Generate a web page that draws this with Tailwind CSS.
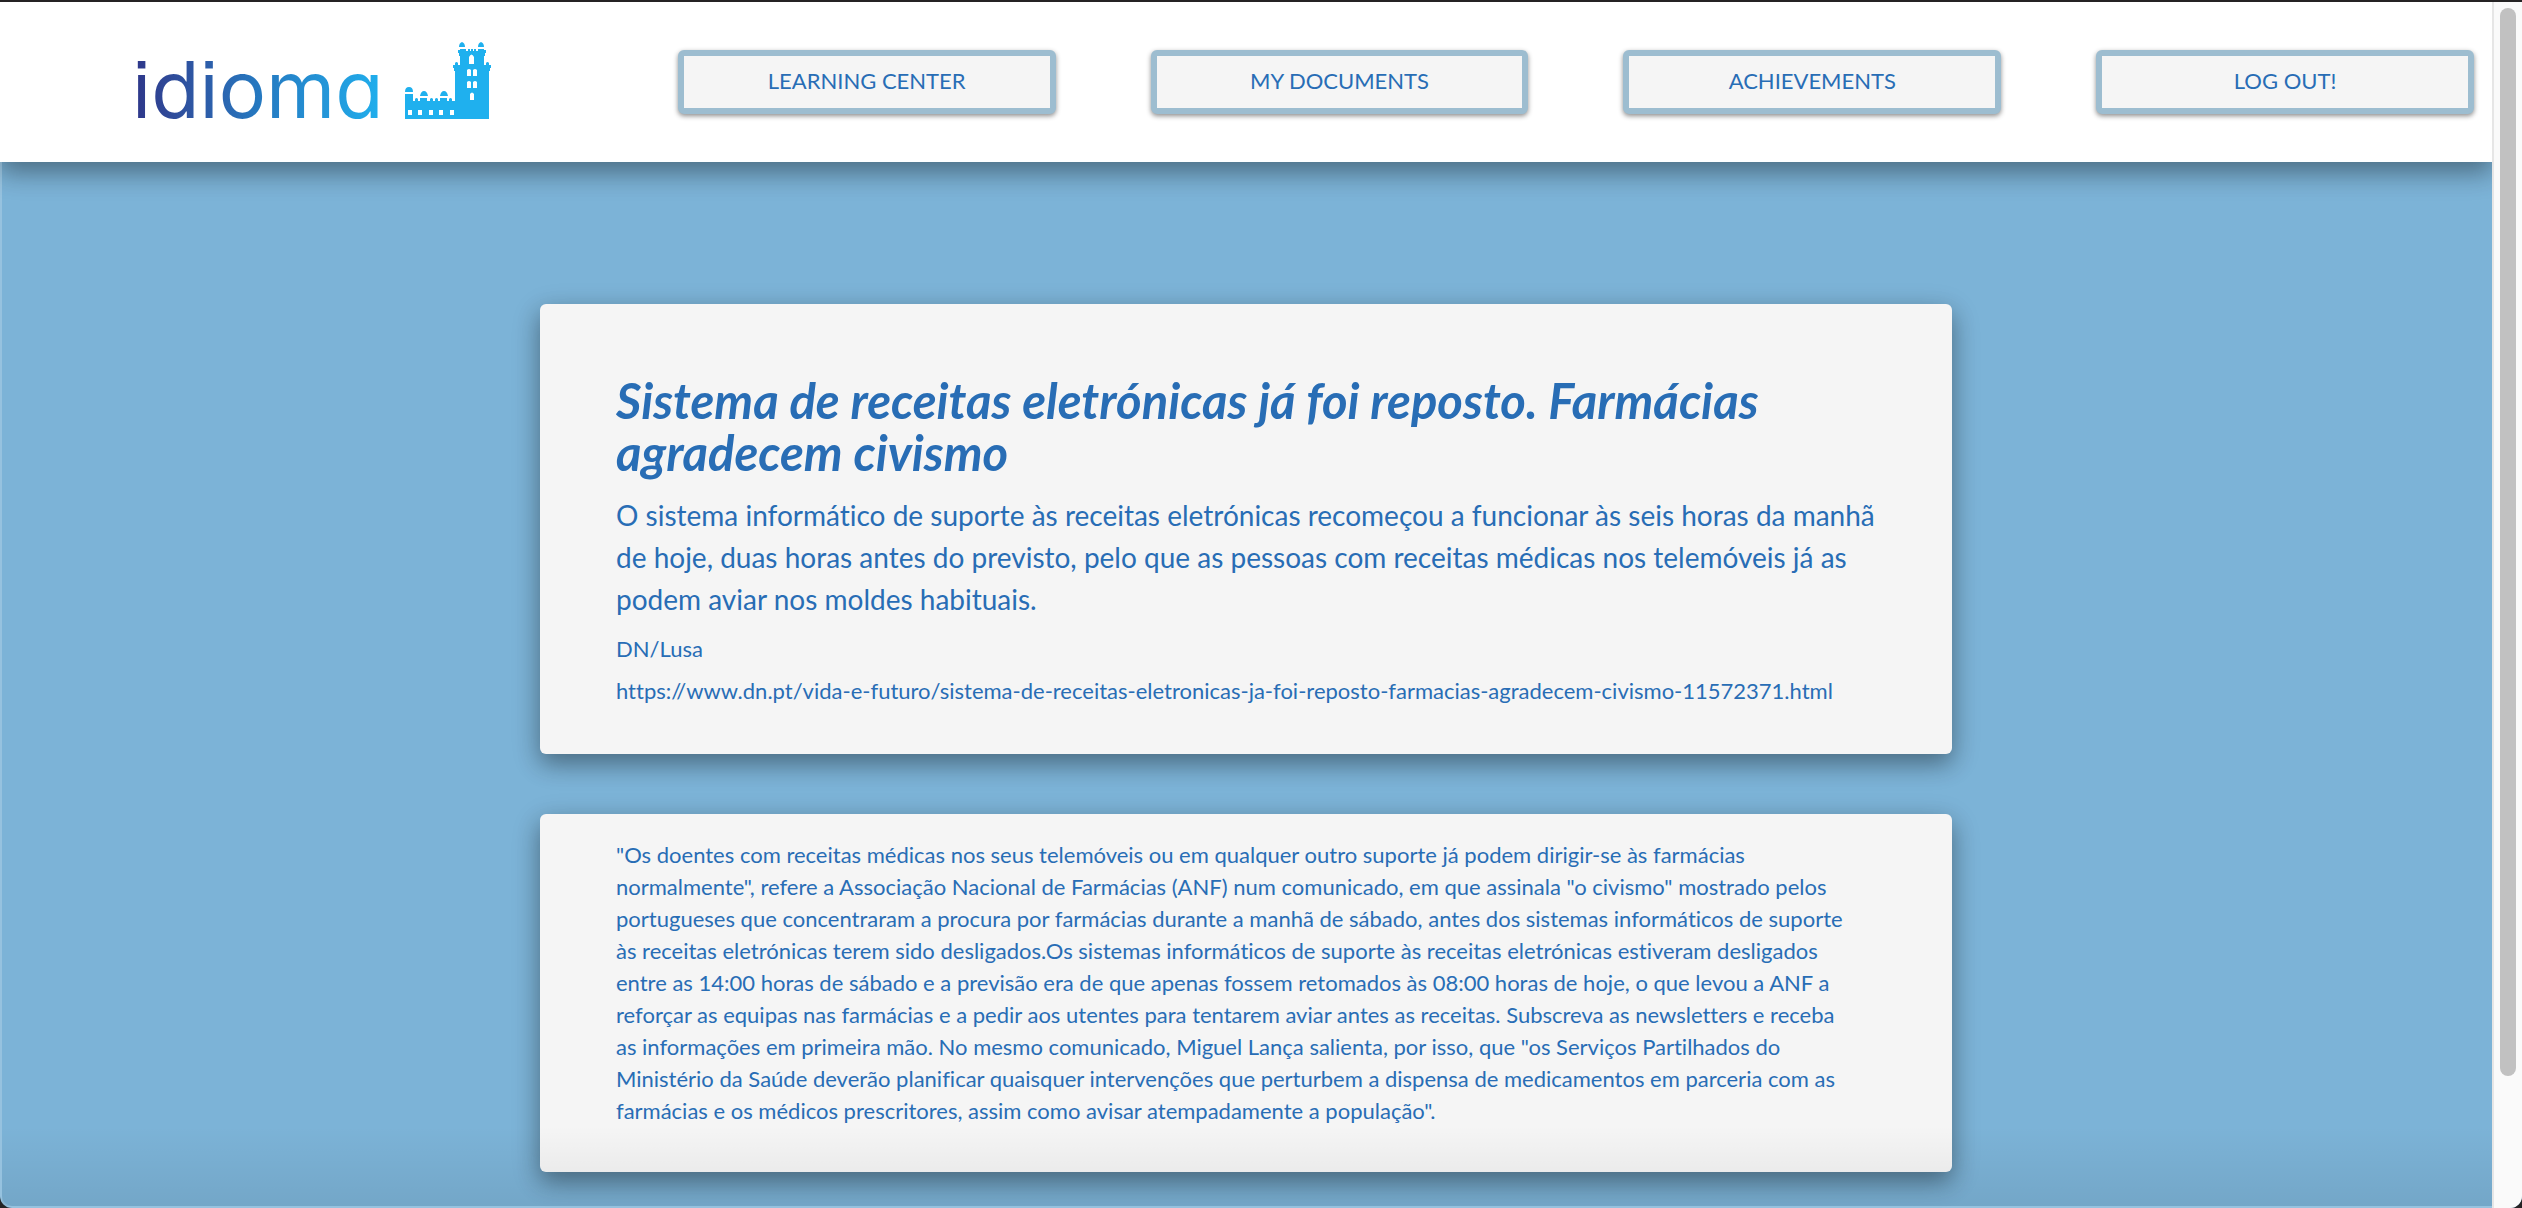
<!DOCTYPE html>
<html lang="pt">
<head>
<meta charset="utf-8">
<title>idioma</title>
<script src="https://cdn.jsdelivr.net/npm/@tailwindcss/browser@4"></script>
</head>
<body class="bg-[#252324] font-['Lato',sans-serif] text-[#286db5] [font-variant-ligatures:none]">
<div class="relative flex h-screen overflow-hidden rounded-b-xl border-t-2 border-[#252324] bg-[#7cb3d7]">
  <div class="flex min-w-0 flex-1 flex-col">
    <header class="relative z-10 flex h-40 shrink-0 items-start justify-between bg-white shadow-[0_10px_22px_rgba(0,0,0,0.25),0_8px_30px_rgba(0,0,0,0.2)]">
      <a href="#" class="flex pl-32 pt-9" aria-label="idioma">
        <span class="bg-linear-to-r from-[#2e3487] via-[#2577bf] to-[#1fb0ee] bg-clip-text pl-1 font-['Inter',sans-serif] text-[79px] leading-[102px] font-normal text-transparent [font-feature-settings:'cv11','ss07']">idioma</span>
        <svg class="mt-1 ml-5 h-[78px] w-[88px]" viewBox="0 0 88 78" fill="#1fb0ee" aria-hidden="true">
          <path fill-rule="evenodd" d="M1 77V57h8v-1 3h2v-2q1.500-2 3 0v2h2v-3h7v3h3v-2q1.500-2 3 0v2h2v-2q1.500-2 3 0v2h2v-3h7v3h2v-2q1.500-2 3 0v2h3V29h-1v-3h-1v-3h2v-2q1.500-2 3 0v2h2V14h-1v-3h-1V8h2V7h6v2h2V7h2v2h1V7h2v2h1V7h2v2h2V7h6v1h2v3h-1v3h-1v9h2v-2q1.500-2 3 0v2h2v3h-1v3h-1v48ZM65 22h5v-7q-2.500-5-5 0ZM63 34h4v-6q-2-2-4 0ZM69 34h4v-6q-2-2-4 0ZM63 46h4v-6q-2-2-4 0ZM69 46h4v-6q-2-2-4 0ZM66 58h4v-6q-2-3-4 0ZM4 73h4v-5h-4ZM14 73h4v-5h-4ZM25 73h4v-5h-4ZM35 73h4v-5h-4ZM46 73h4v-5h-4Z"/>
          <path d="M1 50q0-5 4-5q4 0 4 5ZM1 52h8v5h-8ZM16 54q1-5 4-5q3 0 4 5ZM36 54q1-5 4-5q3 0 4 5ZM55 5q0-4 3-5q3 1 3 5ZM74 5q0-4 3-5q3 1 3 5Z"/>
        </svg>
      </a>
      <nav class="mt-12 grid w-[calc(72%+20px)] shrink-0 grid-cols-4 gap-x-[95px] pr-[18px] text-[22px] leading-7">
        <button class="h-16 rounded-md border-[6px] border-[#9dbdd0] bg-[#f5f5f5] pb-0.5 shadow-[0_2px_5px_rgba(0,0,0,0.45)]">LEARNING CENTER</button>
        <button class="h-16 rounded-md border-[6px] border-[#9dbdd0] bg-[#f5f5f5] pb-0.5 shadow-[0_2px_5px_rgba(0,0,0,0.45)]">MY DOCUMENTS</button>
        <button class="h-16 rounded-md border-[6px] border-[#9dbdd0] bg-[#f5f5f5] pb-0.5 shadow-[0_2px_5px_rgba(0,0,0,0.45)]">ACHIEVEMENTS</button>
        <button class="h-16 rounded-md border-[6px] border-[#9dbdd0] bg-[#f5f5f5] pb-0.5 shadow-[0_2px_5px_rgba(0,0,0,0.45)]">LOG OUT!</button>
      </nav>
    </header>
    <main class="mx-auto flex w-full max-w-[1412px] flex-col gap-[60px] pt-[142px] whitespace-nowrap">
      <article class="rounded-md bg-[#f5f5f5] px-[76px] pt-[70px] pb-[42px] shadow-[0_10px_22px_rgba(0,0,0,0.25),0_8px_30px_rgba(0,0,0,0.2)]">
        <h1 class="text-[49px] leading-[52px] font-bold italic">Sistema de receitas eletrónicas já foi reposto. Farmácias<br>agradecem civismo</h1>
        <p class="mt-4 text-[28px] leading-[42px]">O sistema informático de suporte às receitas eletrónicas recomeçou a funcionar às seis horas da manhã<br>de hoje, duas horas antes do previsto, pelo que as pessoas com receitas médicas nos telemóveis já as<br>podem aviar nos moldes habituais.</p>
        <p class="mt-2 text-[22px] leading-[42px]">DN/Lusa</p>
        <p class="text-[22px] leading-[42px]"><a href="https://www.dn.pt/vida-e-futuro/sistema-de-receitas-eletronicas-ja-foi-reposto-farmacias-agradecem-civismo-11572371.html">https://www.dn.pt/vida-e-futuro/sistema-de-receitas-eletronicas-ja-foi-reposto-farmacias-agradecem-civismo-11572371.html</a></p>
      </article>
      <article class="rounded-md bg-[#f5f5f5] px-[76px] pt-[25px] pb-[45px] shadow-[0_10px_22px_rgba(0,0,0,0.25),0_8px_30px_rgba(0,0,0,0.2)]">
        <p class="text-[22px] leading-8">"Os doentes com receitas médicas nos seus telemóveis ou em qualquer outro suporte já podem dirigir-se às farmácias<br>normalmente", refere a Associação Nacional de Farmácias (ANF) num comunicado, em que assinala "o civismo" mostrado pelos<br>portugueses que concentraram a procura por farmácias durante a manhã de sábado, antes dos sistemas informáticos de suporte<br>às receitas eletrónicas terem sido desligados.Os sistemas informáticos de suporte às receitas eletrónicas estiveram desligados<br>entre as 14:00 horas de sábado e a previsão era de que apenas fossem retomados às 08:00 horas de hoje, o que levou a ANF a<br>reforçar as equipas nas farmácias e a pedir aos utentes para tentarem aviar antes as receitas. Subscreva as newsletters e receba<br>as informações em primeira mão. No mesmo comunicado, Miguel Lança salienta, por isso, que "os Serviços Partilhados do<br>Ministério da Saúde deverão planificar quaisquer intervenções que perturbem a dispensa de medicamentos em parceria com as<br>farmácias e os médicos prescritores, assim como avisar atempadamente a população".</p>
      </article>
    </main>
  </div>
  <div class="relative z-30 w-[30px] shrink-0 border-l-2 border-[#e6e6e6] bg-[#fafafa] px-1.5 pt-1.5" aria-hidden="true">
    <div class="h-[89%] w-4 rounded-full bg-[#c1c1c1]"></div>
  </div>
  <div class="pointer-events-none absolute inset-0 z-20 flex items-end rounded-b-xl border-x-2 border-b-2 border-white/20" aria-hidden="true">
    <div class="h-20 w-full bg-linear-to-t from-black/7 to-transparent"></div>
  </div>
</div>
</body>
</html>
